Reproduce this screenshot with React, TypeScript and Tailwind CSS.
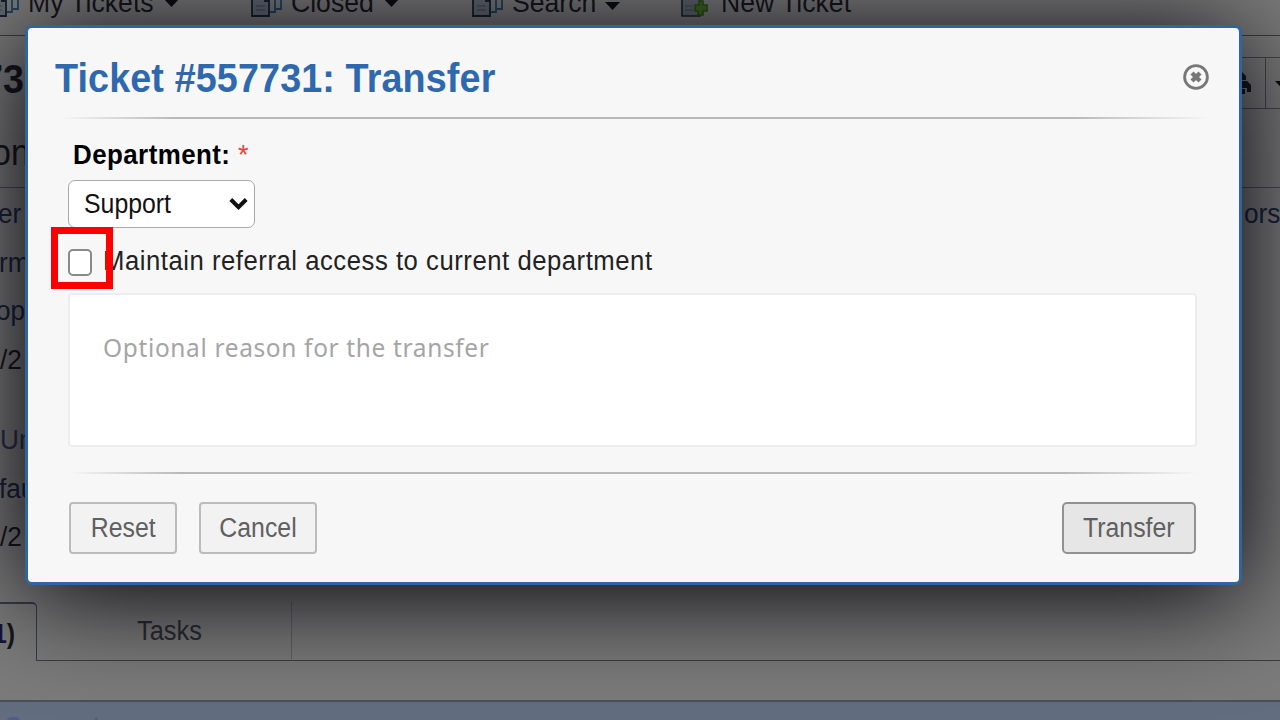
import React from "react";

type RowProps = { children?: React.ReactNode; className?: string };

function SideRow({ children, className = "" }: RowProps) {
  return (
    <div className={"flex h-[48.5px] shrink-0 items-center px-0 text-[27px] " + className}>
      <span className="inline-block origin-left scale-x-[0.97] whitespace-nowrap">{children}</span>
    </div>
  );
}

function StackIcon() {
  return (
    <svg width="32" height="26" viewBox="0 0 32 26" fill="none" stroke="#14202e" strokeWidth="1.8">
      <path d="M1 2h12l5 5v17H1z" fill="#636a72" />
      <path d="M5 14h9M5 18h9" stroke="#4f5760" />
      <path d="M14 4v5h4" />
      <path d="M19 5h5v15h-5M25 5h5v12h-5" stroke="#1f4361" />
    </svg>
  );
}

function NewIcon() {
  return (
    <svg width="28" height="26" viewBox="0 0 28 26" fill="none" stroke="#1a222b" strokeWidth="1.6">
      <path d="M1 2h13l5 5v17H1z" fill="#5f656c" />
      <path d="M4 14h8M4 18h8" stroke="#4a525b" />
      <path d="M18 9h4v4h4v6h-4v4h-5v-4h-3v-6h4z" fill="#3c6a1e" stroke="#2a4f17" />
    </svg>
  );
}

function Caret() {
  return (
    <svg width="15" height="9" viewBox="0 0 15 9">
      <path d="M0 1h15L7.5 9z" fill="#0c0d10" />
    </svg>
  );
}

function NavItem({ label, caret, icon, className, labelClass, caretClass = "" }: {
  label: string; caret?: boolean; icon: React.ReactNode; className: string; labelClass: string; caretClass?: string;
}) {
  return (
    <div className={"flex h-[26px] shrink-0 items-start " + className}>
      <span className="-mt-[8px] w-[40px] shrink-0">{icon}</span>
      <span className={"-mt-[13px] shrink-0 text-[27px] leading-[32px] " + labelClass}>
        <span className="inline-block origin-left scale-x-[0.985] whitespace-nowrap">{label}</span>
      </span>
      {caret && <span className={"flex shrink-0 " + caretClass}><Caret /></span>}
    </div>
  );
}

function Page() {
  return (
    <div className="flex h-[720px] w-[1280px] flex-col overflow-hidden bg-[#7b7b7b] text-[#15161b]">
      <nav className="flex h-[36px] shrink-0 border-b border-[#3c3d40]">
        <NavItem label="My Tickets" caret icon={<StackIcon />} className="-ml-[12px] w-[263px]" labelClass="w-[136px]" caretClass="-mt-[2px]" />
        <NavItem label="Closed" caret icon={<StackIcon />} className="w-[221px]" labelClass="w-[93px]" caretClass="-mt-[2px]" />
        <NavItem label="Search" caret icon={<StackIcon />} className="w-[209px]" labelClass="w-[93px]" caretClass="mt-[1px]" />
        <NavItem label="New Ticket" icon={<NewIcon />} className="w-[200px]" labelClass="w-[140px]" />
      </nav>
      <div className="flex h-[152px] shrink-0 items-start justify-between border-b border-[#4a4b50]">
        <div className="flex w-[60px] flex-col overflow-hidden">
          <div className="-ml-[18px] mt-[19px] h-[48px] text-[41px] leading-[48px] font-bold">
            <span className="inline-block origin-left scale-x-[0.92]">73</span>
          </div>
          <div className="-ml-[8px] mt-[29px] h-[42px] text-[37px] leading-[42px]">
            <span className="inline-block origin-left scale-x-[0.92]">on</span>
          </div>
        </div>
        <div className="mt-[21px] flex h-[52px] w-[60px] overflow-hidden border-y border-[#46474b]">
          <div className="flex w-[46px] shrink-0 items-center justify-end border-r border-[#46474b] pr-[14px]">
            <svg width="26" height="22" viewBox="0 0 26 22" fill="#15171c">
              <path d="M6 0h11l4 4v4H6zM2 9h20l4 4v7h-4v-4H5v4H0v-8zM6 17h14v5H6z" />
            </svg>
          </div>
          <div className="flex shrink-0 items-center pt-[3px] pl-[9px]"><Caret /></div>
        </div>
      </div>
      <div className="flex h-[414px] shrink-0 justify-between">
        <div className="flex w-[60px] flex-col overflow-hidden pt-[2px]">
          <SideRow className="-ml-[2px] text-[#17233a]">er</SideRow>
          <SideRow className="-ml-[1px] text-[#17233a]">rm</SideRow>
          <SideRow className="-ml-[4px] text-[#17233a]">op</SideRow>
          <SideRow>/2</SideRow>
          <SideRow className="mt-[32px] text-[#2c2f48]">Un</SideRow>
          <SideRow className="-ml-[1px] text-[#17233a]">fau</SideRow>
          <SideRow>/2</SideRow>
        </div>
        <div className="w-[36px] pt-[2px]">
          <SideRow className="text-[#17233a]">ors</SideRow>
        </div>
      </div>
      <div className="flex h-[59px] shrink-0">
        <div className="flex w-[37px] shrink-0 items-center rounded-tr-[5px] border-t-2 border-r border-[#343d4b] pt-[4px] text-[27px] font-bold text-[#131538]">
          <span className="-ml-[7px] inline-block origin-left scale-x-[0.92] whitespace-nowrap">1<span className="text-[#15161b]">)</span></span>
        </div>
        <div className="flex w-[255px] items-center border-r border-b border-[#3c3d40] border-r-[#606164] pl-[100px] text-[27px] text-[#2b2c31]">
          <span className="inline-block origin-left scale-x-[0.94]">Tasks</span>
        </div>
        <div className="flex-1 border-b border-[#3c3d40]" />
      </div>
      <div className="h-[39px] shrink-0" />
      <div className="flex-1 overflow-hidden border-t-2 border-[#48505e] bg-[#626d80] pt-[9px]">
        <div className="pl-[5px] text-[27px] leading-[32px] font-bold text-[#4f5f83]">
          <span className="inline-block origin-left scale-x-[0.92]">Support</span>
        </div>
      </div>
    </div>
  );
}

function Rule({ className }: { className: string }) {
  return (
    <div className={"h-[2px] shrink-0 bg-[linear-gradient(to_right,transparent,#b8b8b8_10%,#b8b8b8_88%,transparent)] " + className} />
  );
}

export default function App() {
  return (
    <div className="relative h-[720px] w-[1280px] overflow-hidden font-['Liberation_Sans',Arial,sans-serif]">
      <Page />
      <div className="absolute top-[25px] left-[25px] flex h-[560px] w-[1217px] flex-col rounded-[7px] border-3 border-[#30659f] bg-[#f7f7f7] shadow-[0_10px_105px_#000008]">
        <div className="flex h-[89px] shrink-0 items-start justify-between pr-[29px] pl-[27px]">
          <h1 className="mt-[26px] origin-left scale-x-[0.92] text-[41px] leading-[48px] font-bold tracking-[0.13px] whitespace-nowrap text-[#2e68ae]">
            Ticket #557731: Transfer
          </h1>
          <svg className="mt-[35px]" width="28" height="28" viewBox="0 0 28 28" fill="none" stroke="#777">
            <circle cx="14" cy="14" r="11.4" strokeWidth="2.8" />
            <path d="M10 10l8 8M18 10l-8 8" strokeWidth="4.4" />
          </svg>
        </div>
        <Rule className="mr-[28px] ml-[32px]" />
        <div className="ml-[45px] flex h-[61px] shrink-0 items-start pt-[20px] text-[27px] leading-[32px]">
          <span className="w-[165px]">
            <span className="inline-block origin-left scale-x-[0.96] font-bold tracking-[0.45px] text-black">Department:</span>
          </span>
          <span className="text-[27px] text-[#f04040]">*</span>
        </div>
        <div className="ml-[40px] flex h-[48px] w-[187px] shrink-0 items-center justify-between rounded-[7px] border-[1.5px] border-[#a9a9a9] bg-white pr-[6px] pl-[15px] text-[27px] text-[#111]">
          <span className="inline-block origin-left scale-x-[0.92]">Support</span>
          <svg width="19" height="14" viewBox="0 0 19 14" fill="none" stroke="#111" strokeWidth="4">
            <path d="M1.8 2.5l7.7 7.7 7.7-7.7" />
          </svg>
        </div>
        <div className="relative ml-[40px] flex h-[65px] shrink-0 items-start pt-[17px] text-[27px] leading-[32px] text-[#222]">
          <span className="mt-[4px] mr-[11px] h-[27px] w-[24px] rounded-[5px] border-2 border-[#8a8a8a] bg-white" />
          <span className="inline-block origin-left scale-x-[0.95] tracking-[0.57px] whitespace-nowrap">Maintain referral access to current department</span>
          <span className="absolute top-[-1px] -left-[17px] h-[62px] w-[62px] border-[7px] border-[#ff0000]" />
        </div>
        <div className="ml-[40px] h-[154px] w-[1129px] shrink-0 rounded-[4px] border-2 border-[#ededed] bg-white pt-[35px] pl-[33px] font-['Noto_Sans',sans-serif] text-[26px] leading-[34px] text-[#a5a5a5]">
          <span className="inline-block origin-left scale-x-[0.94] tracking-[0.7px] whitespace-nowrap">Optional reason for the transfer</span>
        </div>
        <Rule className="mx-[41px] mt-[25px]" />
        <div className="mt-[28px] mr-[43px] ml-[41px] flex h-[52px] shrink-0 text-[27px] text-[#606060]">
          <button className="mr-[22px] w-[108px] rounded-[4px] border-2 border-[#bcbcbc] bg-[#f2f2f2]">
            <span className="-mx-4 inline-block scale-x-[0.92]">Reset</span>
          </button>
          <button className="w-[118px] rounded-[4px] border-2 border-[#bcbcbc] bg-[#f2f2f2]">
            <span className="-mx-4 inline-block scale-x-[0.92]">Cancel</span>
          </button>
          <button className="ml-auto w-[134px] rounded-[5px] border-2 border-[#929292] bg-[#e6e6e6]">
            <span className="-mx-4 inline-block scale-x-[0.92]">Transfer</span>
          </button>
        </div>
      </div>
    </div>
  );
}
